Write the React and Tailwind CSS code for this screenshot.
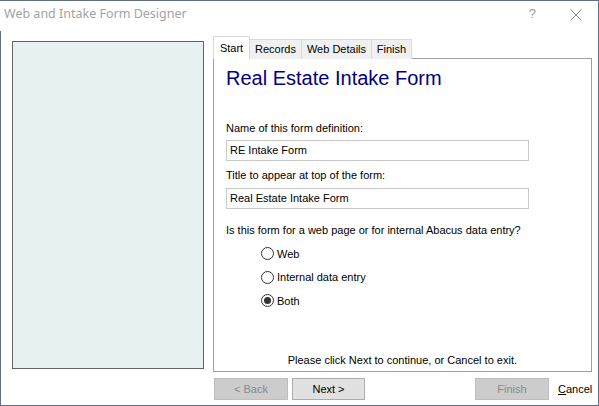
import React from "react";

function Radio({ checked, label }) {
  return (
    <div className="flex items-center h-[23.5px]">
      <span className="w-[13px] h-[13px] rounded-full border border-[#333333] bg-white flex items-center justify-center">
        {checked && <span className="w-[7px] h-[7px] rounded-full bg-[#333333]" />}
      </span>
      <span className="ml-[3px]">{label}</span>
    </div>
  );
}

export default function App() {
  const ui = { fontFamily: '"Liberation Sans", Arial, sans-serif' };
  return (
    <div
      className="w-[599px] h-[406px] bg-white border-t border-r border-b border-[#5f6e89] relative flex flex-col text-[11px] text-black overflow-hidden"
      style={ui}
    >
      <div className="absolute left-0 top-[30px] bottom-0 w-px bg-[#5f6e89]" />
      {/* Title bar */}
      <div className="h-[29px] flex items-center pl-[4px] pr-[16px] shrink-0">
        <span className="text-[12.5px] text-[#a3a3a3] -mt-[3px]" style={{ fontFamily: '"Noto Sans", sans-serif' }}>
          Web and Intake Form Designer
        </span>
        <span className="ml-auto text-[13px] text-[#9a9a9a] -mt-[3px]">?</span>
        <svg className="ml-[34px] -mt-[2px]" width="12" height="12" viewBox="0 0 12 12">
          <path d="M0.5 0.5 L11.5 11.5 M11.5 0.5 L0.5 11.5" stroke="#8a8a8a" strokeWidth="1" fill="none" />
        </svg>
      </div>

      {/* Main */}
      <div className="flex pl-[12px] shrink-0">
        <div className="w-[192px] h-[328px] mt-[11px] border border-[#646464] bg-[#e7f1f2]" />
        <div className="ml-[9px] mt-[6px] w-[379px] flex flex-col">
          <div className="flex items-end h-[23px] relative z-10">
            <div className="h-[23px] w-[37px] bg-white border border-[#d9d9d9] border-b-0 flex items-start pt-[3px] justify-center">
              Start
            </div>
            <div className="h-[20px] w-[52px] bg-[#f0f0f0] border border-[#d9d9d9] border-l-0 border-b-0 flex items-center justify-center">
              Records
            </div>
            <div className="h-[20px] w-[70px] bg-[#f0f0f0] border border-[#d9d9d9] border-l-0 border-b-0 flex items-center justify-center">
              Web Details
            </div>
            <div className="h-[20px] w-[40px] bg-[#f0f0f0] border border-[#d9d9d9] border-l-0 border-b-0 flex items-center justify-center">
              Finish
            </div>
          </div>
          <div className="h-[314px] -mt-px border border-[#a0a0a0] bg-white flex flex-col pl-[12px]">
            <div className="mt-[7px] text-[20px] leading-[24px] text-[#000080]">Real Estate Intake Form</div>
            <div className="mt-[31px] h-[14px] leading-[14px]">Name of this form definition:</div>
            <div className="mt-[5px] w-[303px] h-[21px] border border-[#c8c8c8] flex items-center pl-[3px]">RE Intake Form</div>
            <div className="mt-[7px] h-[14px] leading-[14px]">Title to appear at top of the form:</div>
            <div className="mt-[6px] w-[303px] h-[21px] border border-[#c8c8c8] flex items-center pl-[3px]">Real Estate Intake Form</div>
            <div className="mt-[14px] h-[14px] leading-[14px]">Is this form for a web page or for internal Abacus data entry?</div>
            <div className="mt-[5px] ml-[35px] flex flex-col">
              <Radio label="Web" />
              <Radio label="Internal data entry" />
              <Radio checked label="Both" />
            </div>
            <div className="mt-auto mb-[4px] text-right pr-[74px] h-[14px] leading-[14px]">
              Please click Next to continue, or Cancel to exit.
            </div>
          </div>
        </div>
      </div>

      {/* Buttons */}
      <div className="flex items-center pl-[214px] mt-[6px]">
        <div className="w-[74px] h-[22px] bg-[#cccccc] border border-[#bfbfbf] text-[#8a8a8a] flex items-center justify-center">
          &lt; Back
        </div>
        <div className="ml-[4px] w-[73px] h-[22px] bg-[#e1e1e1] border border-[#adadad] flex items-center justify-center">
          Next &gt;
        </div>
        <div className="ml-[110px] w-[74px] h-[22px] bg-[#cccccc] border border-[#bfbfbf] text-[#8a8a8a] flex items-center justify-center">
          Finish
        </div>
        <div className="ml-[9px]">
          <span className="underline">C</span>ancel
        </div>
      </div>
    </div>
  );
}
